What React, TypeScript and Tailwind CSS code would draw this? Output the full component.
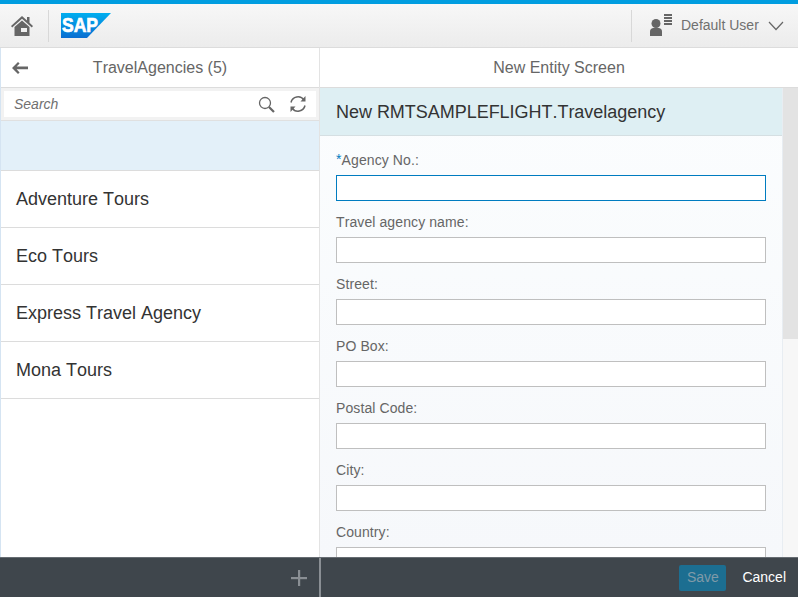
import React from "react";

const agencies = ["Adventure Tours", "Eco Tours", "Express Travel Agency", "Mona Tours"];
const fields = ["Travel agency name:", "Street:", "PO Box:", "Postal Code:", "City:", "Country:"];

function Home() {
  return (
    <svg width="22" height="20" viewBox="0 0 22 20" fill="#666">
      <path d="M11 0 L0 10 L1.2 11.4 L11 2.8 L20.8 11.4 L22 10 L18.5 6.8 V1 H16 V4.6 Z" />
      <path fillRule="evenodd" d="M11 4.4 L3.5 11 V20 H18.5 V11 Z M10 12 H16 V16 H10 Z" />
    </svg>
  );
}

function Sap() {
  return (
    <svg width="50" height="25" viewBox="0 0 50 25">
      <defs>
        <linearGradient id="sapg" x1="0" y1="0" x2="0" y2="1">
          <stop offset="0" stopColor="#00aeef" />
          <stop offset="1" stopColor="#0a6ed1" />
        </linearGradient>
      </defs>
      <path d="M0 0 H50 L26 25 H0 Z" fill="url(#sapg)" />
      <text x="1" y="19" fill="#fff" stroke="#fff" strokeWidth="0.7" fontFamily="Liberation Sans" fontWeight="700" fontSize="20" textLength="36" lengthAdjust="spacingAndGlyphs">SAP</text>
    </svg>
  );
}

function UserIcon() {
  return (
    <svg className="mt-[1px]" width="24" height="24" viewBox="0 0 24 24" fill="#666">
      <circle cx="7" cy="9.5" r="4.5" />
      <path d="M1 22 V17.5 Q1 14.5 4 14 H10 Q13 14.5 13 17.5 V22 Z" />
      <rect x="15" y="0" width="8" height="2" />
      <rect x="15" y="3" width="8" height="2" />
      <rect x="15" y="6" width="8" height="2" />
      <rect x="15" y="9" width="8" height="2" />
    </svg>
  );
}

function Field({ label, required, focused }: { label: string; required?: boolean; focused?: boolean }) {
  return (
    <div className="flex flex-col">
      <div className="h-[16px] text-[14px] leading-[16px] tracking-[0.1px] text-[#666]">
        {required && <span className="relative -top-[1px] text-[#007cc0]">*</span>}
        {label}
      </div>
      <div
        className={
          "mt-[7px] h-[26px] shrink-0 bg-white border " +
          (focused ? "border-[#007cc0]" : "border-[#bfbfbf]")
        }
      />
    </div>
  );
}

export default function App() {
  return (
    <div className="w-[798px] h-[597px] flex flex-col overflow-hidden bg-white [font-kerning:none] font-['Liberation_Sans',Arial,sans-serif]">
      <div className="h-[4px] shrink-0 bg-[#009de0]" />
      <header className="h-[44px] shrink-0 flex items-center bg-gradient-to-b from-[#f7f7f7] to-[#ececec] border-b border-[#dcdcdc]">
        <div className="w-[49px] h-[32px] flex items-center justify-center border-r border-[#d8d8d8] pr-[5px]">
          <Home />
        </div>
        <div className="ml-[12px] flex items-center">
          <Sap />
        </div>
        <div className="ml-auto h-[32px] w-[167px] flex items-center border-l border-[#d8d8d8] pl-[17px]">
          <UserIcon />
          <span className="ml-[8px] text-[14px] text-[#707070]">Default User</span>
          <svg className="ml-[9px]" width="16" height="10" viewBox="0 0 16 10" fill="none" stroke="#666" strokeWidth="1.2">
            <path d="M1 1 L8 8.5 L15 1" />
          </svg>
        </div>
      </header>
      <div className="flex-1 flex min-h-0">
        <aside className="w-[320px] shrink-0 flex flex-col border-l border-[#d5e4f2] border-r border-r-[#e3e3e3]">
          <div className="h-[40px] shrink-0 relative flex items-center justify-center border-b border-[#dcdcdc] text-[16px] text-[#666]">
            <svg className="absolute left-[11px] top-[14px]" width="16" height="12" viewBox="0 0 16 12" fill="#666">
              <path d="M6 0 L7.6 1.5 L4.6 4.6 H16 V7.2 H4.6 L7.6 10.4 L6 12 L0 6 Z" />
            </svg>
            TravelAgencies (5)
          </div>
          <div className="h-[33px] shrink-0 bg-[#f2f2f2] border-b border-[#e0e0e0] px-[3px] pt-[3px]">
            <div className="h-[26px] bg-white flex items-center pl-[10px] pr-[9px]">
              <span className="text-[14px] italic text-[#707070]">Search</span>
              <svg className="ml-auto" width="17" height="17" viewBox="0 0 17 17" fill="none" stroke="#666" strokeWidth="1.3">
                <circle cx="7" cy="7" r="5.5" />
                <path d="M11 11 L16 16" strokeWidth="2.2" />
              </svg>
              <svg className="ml-[14px]" width="18" height="18" viewBox="0 0 18 18" fill="none" stroke="#666" strokeWidth="1.5">
                <path d="M2 7.5 A7.2 7.2 0 0 1 15 5" />
                <path d="M16 10.5 A7.2 7.2 0 0 1 3 13" />
                <path d="M16.5 1 V6.5 H11.5 Z" fill="#666" stroke="none" />
                <path d="M1.5 17 V11.5 H6.5 Z" fill="#666" stroke="none" />
              </svg>
            </div>
          </div>
          <div className="h-[50px] shrink-0 bg-[#e3f0f9] border-b border-[#dcdcdc]" />
          {agencies.map((a) => (
            <div key={a} className="h-[57px] shrink-0 flex items-center pl-[15px] border-b border-[#dcdcdc] text-[18px] text-[#333]">
              {a}
            </div>
          ))}
        </aside>
        <main className="flex-1 flex flex-col min-w-0">
          <div className="h-[40px] shrink-0 flex items-center justify-center border-b border-[#dcdcdc] text-[16px] text-[#666]">
            New Entity Screen
          </div>
          <div className="flex-1 flex min-h-0">
            <div className="w-[463px] shrink-0 flex flex-col min-h-0 overflow-hidden bg-gradient-to-b from-[#fbfdfe] to-[#f6f8fb] border-r border-[#e8edf2]">
              <div className="h-[48px] shrink-0 flex items-center pl-[16px] pt-[2px] bg-[#deeff3] border-b border-[#d5dfe2] text-[18px] tracking-[-0.03px] text-[#333]">
                New RMTSAMPLEFLIGHT.Travelagency
              </div>
              <div className="flex flex-col gap-[13px] pt-[16px] pl-[16px] pr-[16px]">
                <Field label="Agency No.:" required focused />
                {fields.map((f) => (
                  <Field key={f} label={f} />
                ))}
              </div>
            </div>
            <div className="flex-1 bg-[#f7f7f7]">
              <div className="h-[251px] bg-[#e3e3e3]" />
            </div>
          </div>
        </main>
      </div>
      <footer className="h-[40px] shrink-0 flex bg-[#3f464c] border-t border-[#666c72]">
        <div className="w-[321px] shrink-0 flex items-center justify-end pr-[12px] border-r-2 border-[#8a8f94]">
          <svg width="16" height="16" viewBox="0 0 16 16" fill="#8a8f94">
            <rect x="7" y="0" width="2.2" height="16" />
            <rect x="0" y="7" width="16" height="2.2" />
          </svg>
        </div>
        <div className="flex-1 flex items-center justify-end pr-[12px]">
          <div className="w-[47px] h-[26px] rounded-[2px] bg-[#1c6e91] flex items-center justify-center text-[14px] font-normal text-[#7f9aa8]">
            Save
          </div>
          <div className="ml-[16px] text-[14px] text-white">Cancel</div>
        </div>
      </footer>
    </div>
  );
}
